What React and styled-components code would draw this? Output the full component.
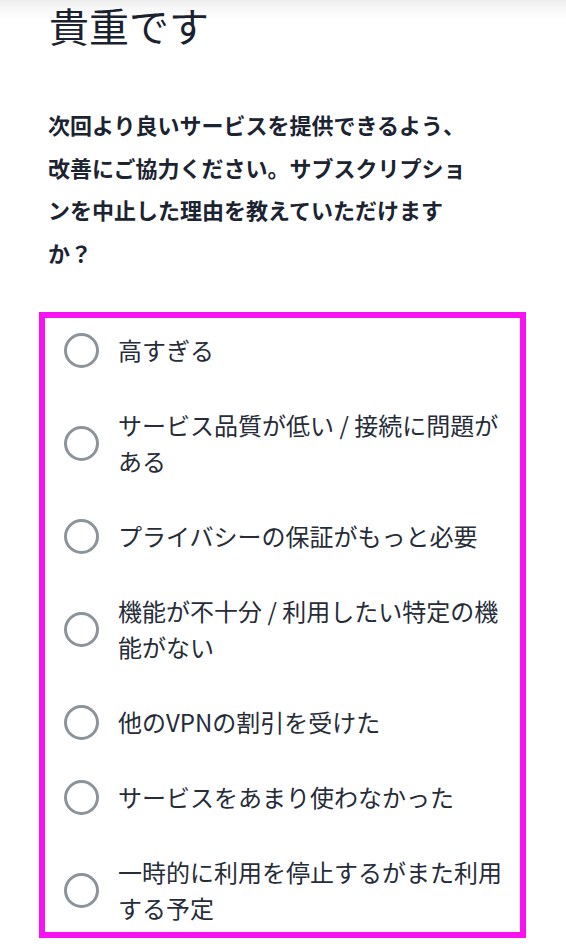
import styled, { createGlobalStyle } from 'styled-components';

const reasons = [
    '高すぎる',
    'サービス品質が低い / 接続に問題がある',
    'プライバシーの保証がもっと必要',
    '機能が不十分 / 利用したい特定の機能がない',
    '他のVPNの割引を受けた',
    'サービスをあまり使わなかった',
    '一時的に利用を停止するがまた利用する予定',
];

function App() {
    return (
        <>
            <GlobalStyle />
            <Pagina>
                <Titulo>貴重です</Titulo>
                <Pregunta>
                    次回より良いサービスを提供できるよう、改善にご協力ください。サブスクリプションを中止した理由を教えていただけますか？
                </Pregunta>
                <Opciones>
                    {reasons.map((texto) => (
                        <Opcion key={texto}>
                            <Radio name='motivo' value={texto} />
                            <span>{texto}</span>
                        </Opcion>
                    ))}
                </Opciones>
            </Pagina>
        </>
    );
}

export default App;

const GlobalStyle = createGlobalStyle`
    * {
        box-sizing: border-box;
    }
    body {
        margin: 0;
        background: #ffffff;
        font-family: "Noto Sans CJK JP", "Noto Sans", sans-serif;
        color: #1c2331;
    }
`

const Pagina = styled.main`
    min-height: 948px;
    padding: 0 40px 0 39px;
    background: linear-gradient(to bottom, #ececec 0px, #f7f7f7 8px, #ffffff 20px);
`

const Titulo = styled.h1`
    margin: 0;
    padding: 1px 0 0 10px;
    font-size: 40px;
    line-height: 48px;
    font-weight: 400;
    color: #1a2230;
`

const Pregunta = styled.p`
    margin: 54px 0 0 0;
    padding-left: 9px;
    max-width: 440px;
    font-size: 22px;
    line-height: 42.5px;
    font-weight: 700;
    color: #1c2331;
`

const Opciones = styled.div`
    margin-top: 39px;
    border: 6px solid #f812f2;
    display: flex;
    flex-direction: column;
    gap: 39px;
    padding: 14px 0 6px 19px;
`

const Opcion = styled.label`
    display: flex;
    align-items: center;
    gap: 19px;
    font-size: 24px;
    line-height: 36px;
    font-weight: 400;
    color: #262c38;
    cursor: pointer;
`

const Radio = styled.input.attrs({ type: 'radio' })`
    appearance: none;
    margin: 0;
    flex-shrink: 0;
    width: 35px;
    height: 35px;
    border: 3px solid #8d939a;
    border-radius: 50%;
    background: #ffffff;
    cursor: pointer;

    &:checked {
        border-color: #1c2331;
        box-shadow: inset 0 0 0 6px #ffffff;
        background: #1c2331;
    }
`
